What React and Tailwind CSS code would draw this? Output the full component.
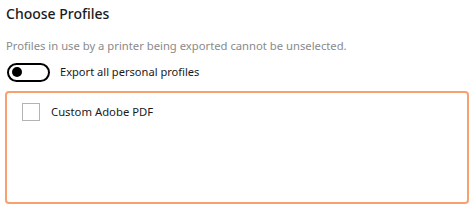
import React, { useState } from 'react';

export default function App() {
  const [exportAll, setExportAll] = useState(false);
  const [checked, setChecked] = useState(false);

  return (
    <div className="w-[474px] h-[210px] bg-white px-[5px] pt-[3px] font-['Noto_Sans',sans-serif]">
      <h3 className="pl-px text-[14px] leading-[22px] font-medium text-[#1a1a1a]">Choose Profiles</h3>

      <p className="mt-[13px] pl-px text-[11.25px] leading-[16px] text-[#8a8a8a]">
        Profiles in use by a printer being exported cannot be unselected.
      </p>

      {/* toggle */}
      <div className="mt-[6px] h-[24px] flex items-center gap-[10px] pl-[2px]">
        <button
          className="w-[43px] h-[19px] rounded-full border-2 border-black flex items-center px-[3px]"
          onClick={() => setExportAll(!exportAll)}
        >
          <span className="w-[10px] h-[10px] rounded-full bg-black" />
        </button>
        <span className="text-[11.1px] text-[#1a1a1a]">Export all personal profiles</span>
      </div>

      {/* profile list */}
      <div className="mt-[7px] w-[464px] h-[113px] border-2 border-[#f9a06f] rounded-[4px] px-[15px] pt-[9px]">
        <label className="flex items-center gap-[11px] h-[20px] cursor-pointer">
          <span
            className="w-[18px] h-[18px] border border-[#b4b4b4] bg-white"
            onClick={() => setChecked(!checked)}
          />
          <span className="text-[11.3px] text-[#1a1a1a]">Custom Adobe PDF</span>
        </label>
      </div>
    </div>
  );
}
